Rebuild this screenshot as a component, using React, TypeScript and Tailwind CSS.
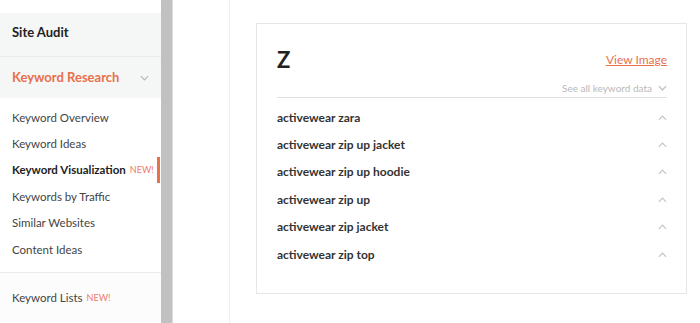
const FONT = "font-['Lato','Open_Sans',sans-serif]"

function ChevronDown({ className }: { className?: string }) {
  return (
    <svg viewBox="0 0 10 6" className={className} fill="none" stroke="currentColor" strokeWidth="1.3">
      <path d="M1 1l4 4 4-4" />
    </svg>
  )
}

function ChevronUp({ className }: { className?: string }) {
  return (
    <svg viewBox="0 0 10 6" className={className} fill="none" stroke="currentColor" strokeWidth="1.3">
      <path d="M1 5l4-4 4 4" />
    </svg>
  )
}

const navItems = [
  { label: "Keyword Overview" },
  { label: "Keyword Ideas" },
  { label: "Keyword Visualization", active: true, isNew: true },
  { label: "Keywords by Traffic" },
  { label: "Similar Websites" },
  { label: "Content Ideas" },
]

const keywords = [
  "activewear zara",
  "activewear zip up jacket",
  "activewear zip up hoodie",
  "activewear zip up",
  "activewear zip jacket",
  "activewear zip top",
]

function Sidebar() {
  return (
    <aside className="flex w-[161px] shrink-0 flex-col bg-white">
      <div className="h-[13px]" />
      <div className="flex h-[44px] items-center border-b border-[#e9ebeb] bg-[#f5f6f6] pb-[3px] pl-3 text-[13px] font-bold text-[#222]">
        Site Audit
      </div>
      <div className="flex h-[41px] items-center justify-between bg-[#f5f6f6] pl-3 pr-[12px]">
        <span className="text-[13px] font-bold text-[#e8704d]">Keyword Research</span>
        <ChevronDown className="h-[6px] w-[9px] text-[#b8b8b8]" />
      </div>
      <ul className="flex flex-col pt-[6px] pb-[10px]">
        {navItems.map((item) => (
          <li key={item.label} className="relative flex h-[26.4px] items-center pl-3 text-[11.5px] text-[#444]">
            <span className={item.active ? "font-bold text-[#222]" : ""}>{item.label}</span>
            {item.isNew && <span className="ml-[4px] text-[9px] text-[#ef7a6a]">NEW!</span>}
            {item.active && <span className="absolute right-[1px] top-0 h-full w-[3px] bg-[#e8704d]" />}
          </li>
        ))}
      </ul>
      <div className="flex h-[49px] items-center border-t border-[#ebebeb] bg-[#fcfcfc] pl-3 text-[11.5px] text-[#444]">
        Keyword Lists
        <span className="ml-[4px] text-[9px] text-[#ef7a6a]">NEW!</span>
      </div>
    </aside>
  )
}

export default function App() {
  return (
    <div className={`flex h-[323px] w-[700px] overflow-hidden bg-white ${FONT}`}>
      <Sidebar />
      <div className="w-[12px] shrink-0 border-r border-[#dcdcdc] bg-[#c1c1c1]" />
      <div className="w-[57px] shrink-0 border-r border-[#efefef]" />
      <main className="flex-1 pl-[26px] pt-[23px]">
        <div className="h-[271px] w-[431px] border border-[#e6e6e6] pl-[20px] pr-[19px] pt-[23px]">
          <div className="flex h-[26px] items-center justify-between">
            <span className="text-[22px] font-bold leading-none text-[#222]">Z</span>
            <a className="text-[12px] text-[#e8704d] underline">View Image</a>
          </div>
          <div className="flex h-[25px] items-end justify-end gap-[6px] border-b border-[#dfe1e1] pb-[2px] text-[10px] text-[#b9b9b9]">
            <span className="leading-[14px]">See all keyword data</span>
            <ChevronDown className="mb-[4px] h-[6px] w-[9px] text-[#b9b9b9]" />
          </div>
          <ul className="flex flex-col pt-[6px]">
            {keywords.map((k) => (
              <li key={k} className="flex h-[27.4px] items-center justify-between text-[12px] font-bold text-[#333]">
                {k}
                <ChevronUp className="h-[6px] w-[9px] text-[#c4c4c4]" />
              </li>
            ))}
          </ul>
        </div>
      </main>
    </div>
  )
}
